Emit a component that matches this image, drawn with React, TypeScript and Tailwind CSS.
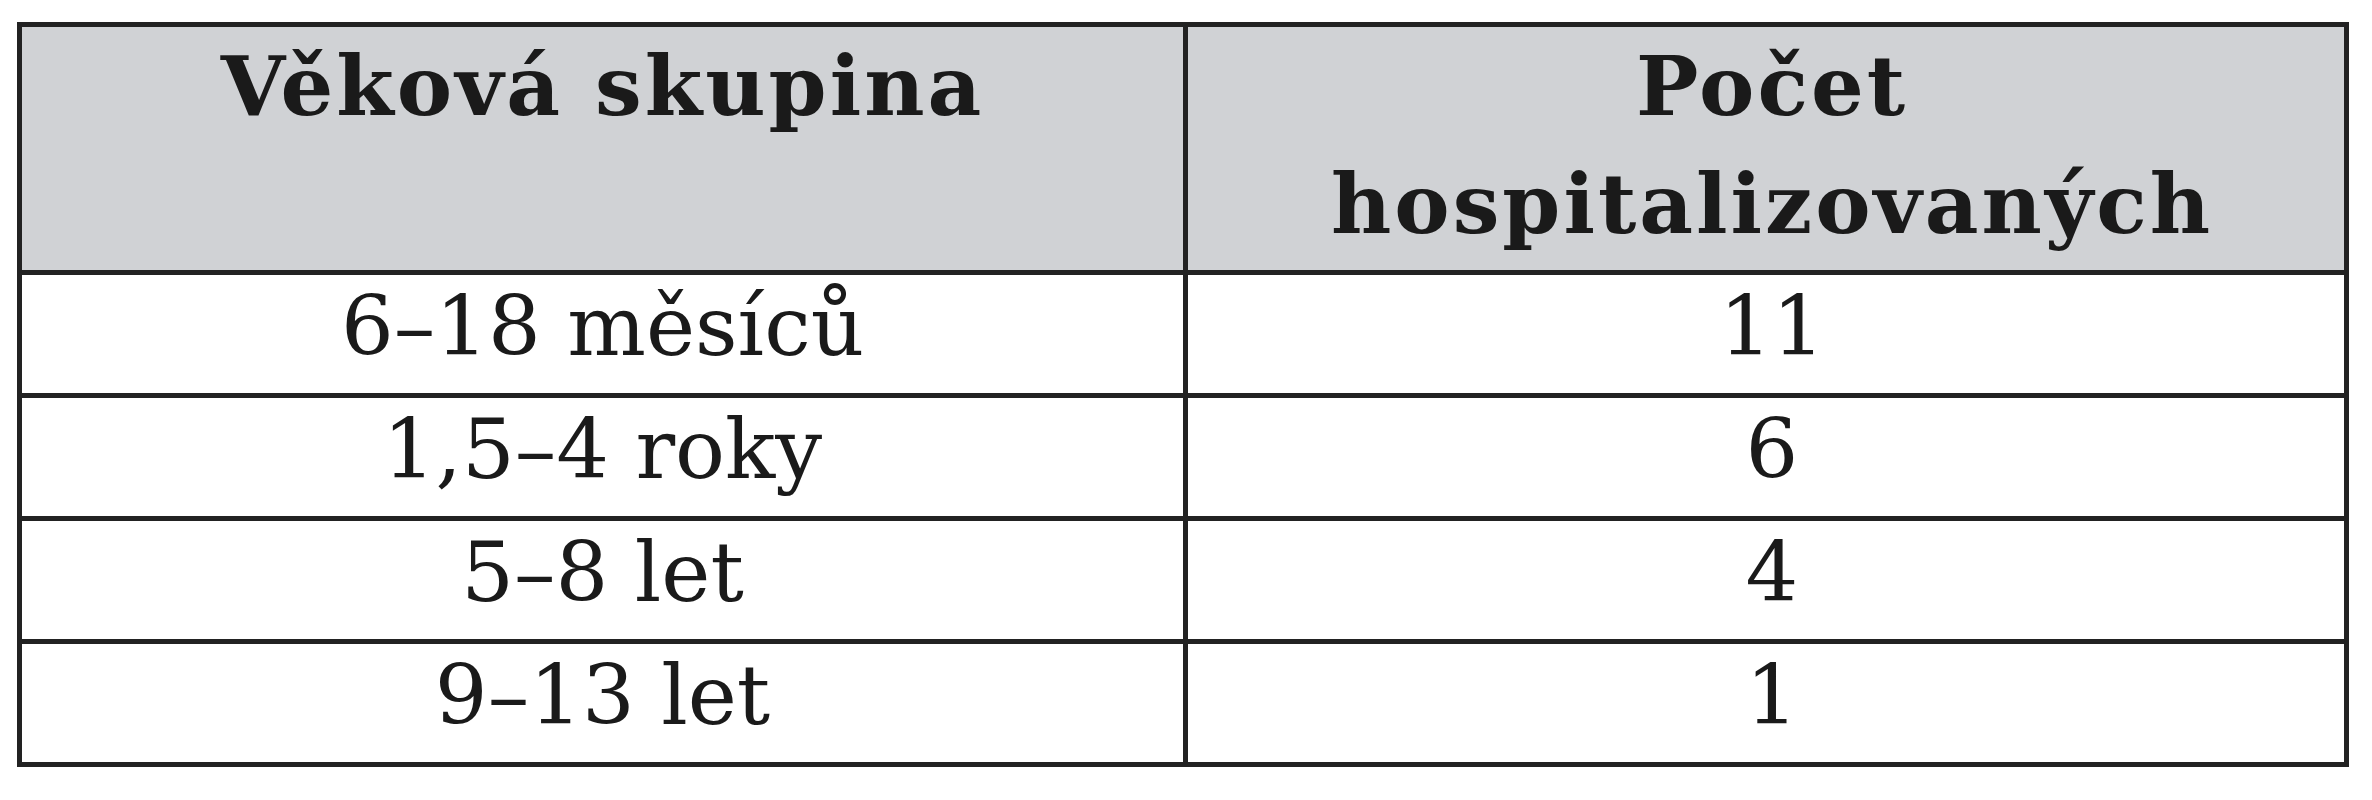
import React from 'react'

export default function App() {
  const rows = [
    { group: "6–18 měsíců", count: "11" },
    { group: "1,5–4 roky", count: "6" },
    { group: "5–8 let", count: "4" },
    { group: "9–13 let", count: "1" },
  ]

  return (
    <div className="w-[2372px] h-[800px] bg-white pt-[22px] pl-[17px] font-['DejaVu_Serif',serif] text-[#1a1a1a]">
      <table className="w-[2332px] border-collapse border-[5px] border-[#222222]">
        <thead>
          <tr className="bg-[#d0d2d5]">
            <th className="w-[1166px] h-[248px] align-top border-[5px] border-[#222222] text-[83px] leading-[118px] font-bold tracking-[3px] p-0">
              Věková skupina
            </th>
            <th className="h-[248px] align-top border-[5px] border-[#222222] text-[83px] leading-[118px] font-bold tracking-[3px] p-0 pl-[12px]">
              Počet<br />hospitalizovaných
            </th>
          </tr>
        </thead>
        <tbody>
          {rows.map((row, i) => (
            <tr key={i}>
              <td className="h-[123px] align-top border-[5px] border-[#222222] text-[83px] leading-[104px] text-center p-0">
                {row.group}
              </td>
              <td className="h-[123px] align-top border-[5px] border-[#222222] text-[83px] leading-[104px] text-center p-0 pl-[12px]">
                {row.count}
              </td>
            </tr>
          ))}
        </tbody>
      </table>
    </div>
  )
}
